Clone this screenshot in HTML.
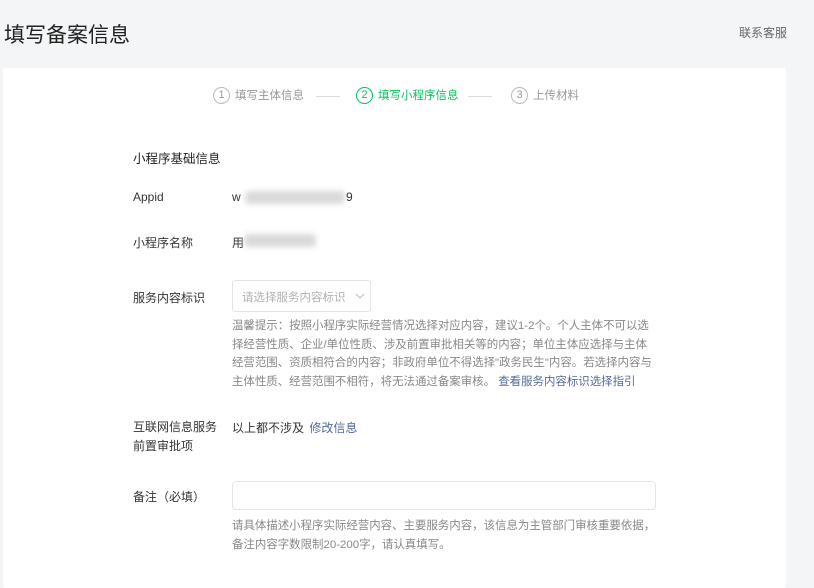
<!DOCTYPE html>
<html><head><meta charset="utf-8"><style>
body{margin:0;width:814px;height:566px;overflow:hidden;background:#f4f5f7;font-family:"Liberation Sans","Noto Sans CJK SC",sans-serif;color:#353535;position:relative}
.a{position:absolute;white-space:nowrap}
.card{position:absolute;left:3px;top:68px;width:783px;height:520px;background:#fff;border-radius:3px}
.lbl{font-size:12px;color:#353535}
.c{display:inline-block;width:15px;height:15px;border:1px solid #bbb;border-radius:50%;text-align:center;line-height:15px;font-size:11px;margin-right:5px;vertical-align:middle}
.blur{position:absolute;background:#d9d9d9;filter:blur(3px);border-radius:4px}
.tip{font-size:11.45px;color:#888;line-height:18.7px}
</style></head><body>
<div class="a" style="left:4px;top:19px;font-size:21px;color:#222">填写备案信息</div>
<div class="a" style="left:739px;top:24px;font-size:12px;color:#666">联系客服</div>
<div class="card"></div>
<div class="a" style="left:213px;top:87px;font-size:11.5px;color:#999"><span class="c">1</span>填写主体信息</div>
<div class="a" style="left:316px;top:96px;width:24px;border-top:1px solid #ddd"></div>
<div class="a" style="left:356px;top:87px;font-size:11.5px;color:#07c160"><span class="c" style="border-color:#07c160">2</span>填写小程序信息</div>
<div class="a" style="left:468px;top:96px;width:24px;border-top:1px solid #ddd"></div>
<div class="a" style="left:511px;top:87px;font-size:11.5px;color:#999"><span class="c">3</span>上传材料</div>
<div class="a" style="left:133px;top:148px;font-size:12.5px;color:#222">小程序基础信息</div>
<div class="a lbl" style="left:133px;top:190px">Appid</div>
<div class="a lbl" style="left:232px;top:190px">w</div>
<div class="blur" style="left:245px;top:191px;width:100px;height:13px"></div>
<div class="a lbl" style="left:346px;top:190px">9</div>
<div class="a lbl" style="left:133px;top:234px">小程序名称</div>
<div class="a lbl" style="left:232px;top:234px">用</div>
<div class="blur" style="left:244px;top:234px;width:72px;height:13px"></div>
<div class="a lbl" style="left:133px;top:289px">服务内容标识</div>
<div class="a" style="left:232px;top:280px;width:137px;height:30px;border:1px solid #e4e4e4;border-radius:3px"></div>
<div class="a" style="left:242px;top:289px;font-size:11.5px;color:#b2b2b2">请选择服务内容标识</div>
<svg class="a" style="left:355px;top:293px" width="10" height="6"><path d="M1 1L5 5L9 1" fill="none" stroke="#bbb" stroke-width="1"/></svg>
<div class="a tip" style="left:232px;top:317px">温馨提示：按照小程序实际经营情况选择对应内容，建议1-2个。个人主体不可以选<br>择经营性质、企业/单位性质、涉及前置审批相关等的内容；单位主体应选择与主体<br>经营范围、资质相符合的内容；非政府单位不得选择"政务民生"内容。若选择内容与<br>主体性质、经营范围不相符，将无法通过备案审核。 <span style="color:#576b95">查看服务内容标识选择指引</span></div>
<div class="a lbl" style="left:133px;top:418px;line-height:19px">互联网信息服务<br>前置审批项</div>
<div class="a lbl" style="left:232px;top:419px">以上都不涉及 <span style="color:#576b95;margin-left:2px">修改信息</span></div>
<div class="a lbl" style="left:133px;top:488px">备注（必填）</div>
<div class="a" style="left:232px;top:481px;width:422px;height:27px;border:1px solid #e4e4e4;border-radius:4px"></div>
<div class="a tip" style="left:232px;top:517px">请具体描述小程序实际经营内容、主要服务内容，该信息为主管部门审核重要依据，<br>备注内容字数限制20-200字，请认真填写。</div>
</body></html>
